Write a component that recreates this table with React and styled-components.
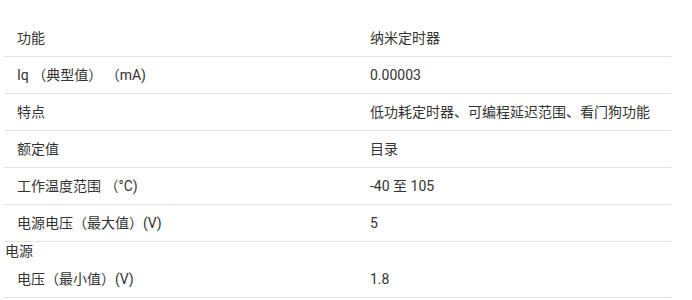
import React from 'react';
import styled, { createGlobalStyle } from 'styled-components';

const GlobalStyle = createGlobalStyle`
  body {
    margin: 0;
    background: #fff;
    font-family: Roboto, "Noto Sans CJK SC", sans-serif;
    color: #333;
  }
`;

const Page = styled.div`
  padding: 20px 21px 0 4px;
`;

const Table = styled.table`
  width: 667px;
  border-collapse: collapse;
  font-size: 14px;
`;

const Row = styled.tr`
  border-bottom: ${p => (p.plain ? 'none' : '1px solid #e3e3e3')};
`;

const Cell = styled.td`
  height: 36px;
  padding: 0 0 0 13px;
  vertical-align: middle;
  line-height: 20px;
  width: ${p => (p.first ? '340px' : 'auto')};
`;

const GroupCell = styled.td`
  padding: 0 0 0 1px;
  height: 19px;
  line-height: 19px;
  font-size: 14px;
`;

const rows = [
  ['功能', '纳米定时器'],
  ['Iq （典型值） （mA)', '0.00003'],
  ['特点', '低功耗定时器、可编程延迟范围、看门狗功能'],
  ['额定值', '目录'],
  ['工作温度范围 （°C)', '-40 至 105'],
  ['电源电压（最大值）(V)', '5'],
];

export default function App() {
  return (
    <>
      <GlobalStyle />
      <Page>
        <Table>
          <tbody>
            {rows.map(([k, v]) => (
              <Row key={k}>
                <Cell first>{k}</Cell>
                <Cell>{v}</Cell>
              </Row>
            ))}
            <Row plain>
              <GroupCell colSpan={2}>电源</GroupCell>
            </Row>
            <Row>
              <Cell first>电压（最小值）(V)</Cell>
              <Cell>1.8</Cell>
            </Row>
          </tbody>
        </Table>
      </Page>
    </>
  );
}
